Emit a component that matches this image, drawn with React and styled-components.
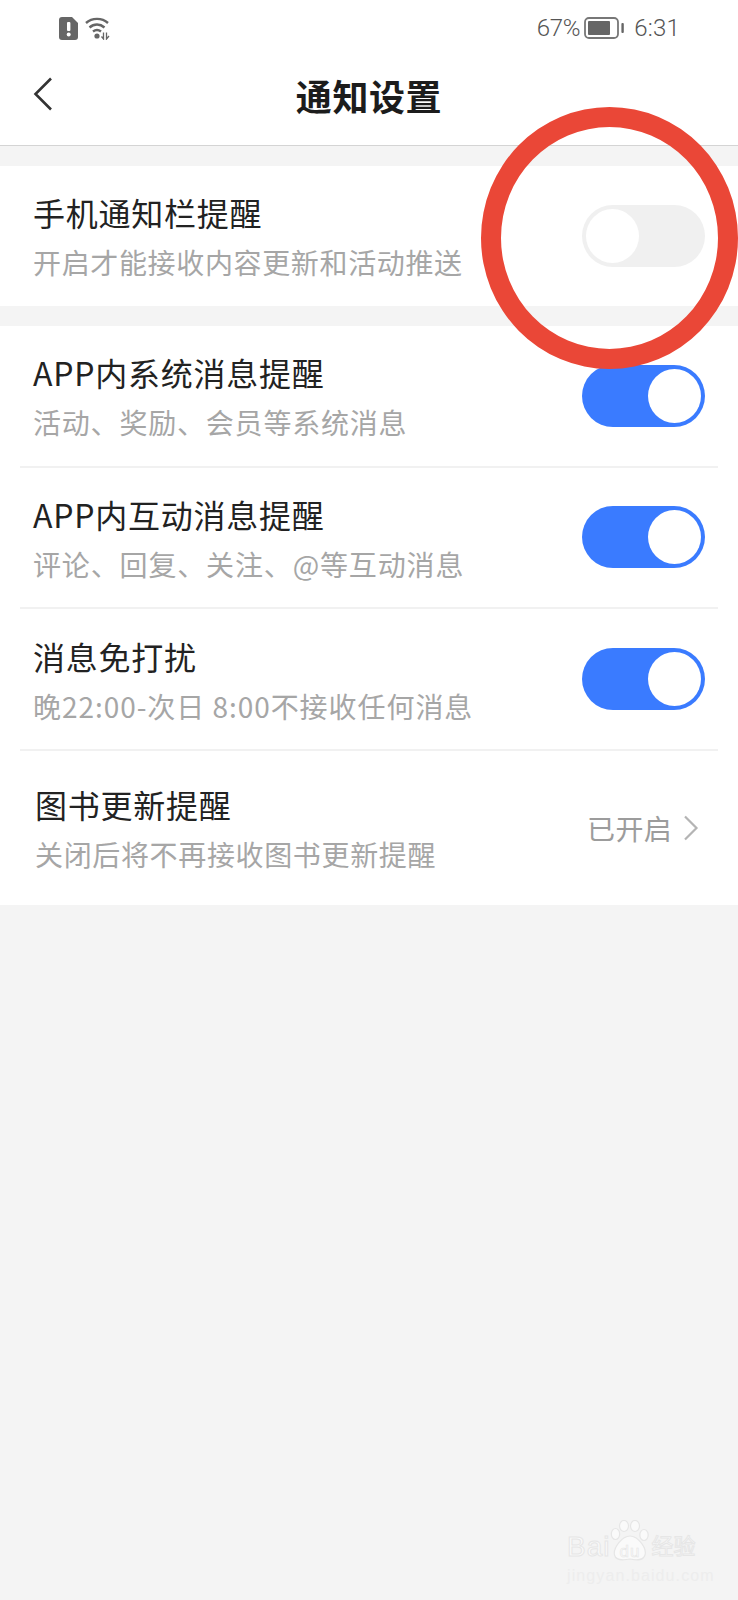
import React from "react";
import styled, { createGlobalStyle } from "styled-components";

const GlobalStyle = createGlobalStyle`
    html, body {
        margin: 0;
        padding: 0;
        background: #f4f4f4;
    }

    body {
        font-family: "Noto Sans CJK SC", "Noto Sans", sans-serif;
    }
`;

const rows = [
    { title: "APP内系统消息提醒", desc: "活动、奖励、会员等系统消息", spacing: 0.8 },
    { title: "APP内互动消息提醒", desc: "评论、回复、关注、@等互动消息", spacing: 0.85 },
    { title: "消息免打扰", desc: "晚22:00-次日 8:00不接收任何消息", spacing: 0.95 },
];

export default function App() {
    return (
        <Page>
            <GlobalStyle />
            <StatusBar>
                <StatusLeft>
                    <AlertIcon />
                    <WifiIcon />
                </StatusLeft>
                <StatusRight>
                    <span>67%</span>
                    <BatteryIcon />
                    <Clock>6:31</Clock>
                </StatusRight>
            </StatusBar>
            <Header>
                <BackButton>
                    <svg width="20" height="34" viewBox="0 0 20 34" fill="none">
                        <path d="M18 1.5 L2.5 17 L18 32.5" stroke="#333" strokeWidth="2.6" />
                    </svg>
                </BackButton>
                <PageTitle>通知设置</PageTitle>
            </Header>

            <Card>
                <Row>
                    <RowText>
                        <RowTitle>手机通知栏提醒</RowTitle>
                        <RowDesc>开启才能接收内容更新和活动推送</RowDesc>
                    </RowText>
                    <Toggle />
                </Row>
            </Card>

            <Card>
                {rows.map((row) => (
                    <Row key={row.title} $divided>
                        <RowText>
                            <RowTitle>{row.title}</RowTitle>
                            <RowDesc $spacing={row.spacing}>{row.desc}</RowDesc>
                        </RowText>
                        <Toggle $on />
                    </Row>
                ))}
                <BookRow>
                    <RowText>
                        <RowTitle>图书更新提醒</RowTitle>
                        <RowDesc>关闭后将不再接收图书更新提醒</RowDesc>
                    </RowText>
                    <RowValue>
                        已开启
                        <svg width="16" height="26" viewBox="0 0 16 26" fill="none">
                            <path d="M2 1.5 L13.5 13 L2 24.5" stroke="#b4b4b4" strokeWidth="2.2" />
                        </svg>
                    </RowValue>
                </BookRow>
            </Card>

            <RedRing />
            <Watermark>
                <WatermarkLogo>
                    <span>Bai</span>
                    <PawIcon />
                    <WatermarkCn>经验</WatermarkCn>
                </WatermarkLogo>
                <WatermarkUrl>jingyan.baidu.com</WatermarkUrl>
            </Watermark>
        </Page>
    );
}

function AlertIcon() {
    return (
        <svg width="19" height="23" viewBox="0 0 19 23">
            <path
                d="M3 0 H13 L19 6 V20 a3 3 0 0 1 -3 3 H3 a3 3 0 0 1 -3 -3 V3 a3 3 0 0 1 3 -3 Z"
                fill="#666"
            />
            <rect x="8" y="5" width="3.4" height="9" rx="1" fill="#fff" />
            <circle cx="9.7" cy="17.5" r="2" fill="#fff" />
        </svg>
    );
}

function WifiIcon() {
    return (
        <svg width="26" height="23" viewBox="0 0 26 23" fill="none">
            <path d="M1 6 C7 0.5 17 0.5 23 6" stroke="#666" strokeWidth="2.4" />
            <path d="M4.5 10.5 C9 6.5 15 6.5 19.5 10.5" stroke="#666" strokeWidth="2.4" />
            <path d="M8 14.5 C10.5 12.5 13.5 12.5 16 14.5" stroke="#666" strokeWidth="2.4" />
            <circle cx="12" cy="19" r="2.6" fill="#666" />
            <path d="M18.5 15.5 V22 L16.5 19.5 M21.5 15.5 V22 L24 19" stroke="#666" strokeWidth="1.3" />
        </svg>
    );
}

function BatteryIcon() {
    return (
        <svg width="40" height="22" viewBox="0 0 40 22" fill="none">
            <rect x="1" y="1" width="33" height="20" rx="4" stroke="#777" strokeWidth="1.8" />
            <rect x="4" y="4" width="22" height="14" rx="1" fill="#666" />
            <rect x="37.4" y="6" width="2.4" height="10" rx="1" fill="#666" />
        </svg>
    );
}

function PawIcon() {
    return (
        <svg width="40" height="42" viewBox="0 0 40 42" fill="#fafafa" stroke="#e6e6e6" strokeWidth="1.2">
            <ellipse cx="5.5" cy="14" rx="4.2" ry="5.5" />
            <ellipse cx="14" cy="6" rx="4.5" ry="5.5" />
            <ellipse cx="25" cy="6" rx="4.5" ry="5.5" />
            <ellipse cx="34" cy="15" rx="4.2" ry="5.5" />
            <path d="M20 16 C28 16 37 28 35 35 C33 41.5 25 40 20 39 C15 40 6 41.5 4.5 35 C3 28 12 16 20 16 Z" />
            <text x="20" y="37" textAnchor="middle" fontSize="17" strokeWidth="0.6" fontFamily="Liberation Sans, sans-serif">
                du
            </text>
        </svg>
    );
}

const Page = styled.div`
    position: relative;
    width: 738px;
    height: 1600px;
    overflow: hidden;
    background: #f4f4f4;
`;

const StatusBar = styled.div`
    height: 56px;
    padding: 0 58px 0 59px;
    box-sizing: border-box;
    display: flex;
    align-items: center;
    justify-content: space-between;
    background: #fff;
`;

const StatusLeft = styled.div`
    display: flex;
    align-items: center;
    gap: 7px;
`;

const StatusRight = styled.div`
    display: flex;
    align-items: center;
    gap: 4px;
    font-family: "Roboto", sans-serif;
    font-weight: 300;
    font-size: 24px;
    letter-spacing: -0.3px;
    color: #555;
`;

const Clock = styled.span`
    margin-left: 6px;
    letter-spacing: 0.2px;
`;

const Header = styled.div`
    position: relative;
    height: 90px;
    box-sizing: border-box;
    display: flex;
    align-items: center;
    justify-content: center;
    background: #fff;
    border-bottom: 1px solid #d4d4d4;
`;

const BackButton = styled.div`
    position: absolute;
    left: 33px;
    top: 21px;
    line-height: 0;
`;

const PageTitle = styled.div`
    margin-top: -12px;
    font-size: 36px;
    line-height: 44px;
    font-weight: 700;
    letter-spacing: 0.6px;
    color: #1c1c1c;
`;

const Card = styled.div`
    margin-top: 20px;
    padding: 0 20px;
    background: #fff;
`;

const Row = styled.div`
    height: ${(p) => (p.$divided ? "141.67px" : "140px")};
    box-sizing: border-box;
    padding: ${(p) => (p.$divided ? "2px 13px 0 13px" : "0 13px 0 13px")};
    display: flex;
    align-items: center;
    justify-content: space-between;
    border-bottom: ${(p) => (p.$divided ? "2px solid #f1f1f1" : "none")};
`;

const BookRow = styled(Row)`
    height: 154px;
    padding: 2px 19px 0 15px;
`;

const RowText = styled.div`
    display: flex;
    flex-direction: column;
    gap: 9px;
`;

const RowTitle = styled.div`
    font-size: 32px;
    line-height: 42px;
    letter-spacing: 0.75px;
    color: #222;
`;

const RowDesc = styled.div`
    font-size: 28px;
    line-height: 40px;
    letter-spacing: ${(p) => p.$spacing ?? 0.65}px;
    color: #a6a6a6;
`;

const RowValue = styled.div`
    display: flex;
    align-items: center;
    gap: 11px;
    margin-top: -2px;
    font-size: 28px;
    letter-spacing: 0.3px;
    color: #9c9c9c;
`;

const Toggle = styled.div`
    position: relative;
    flex: none;
    width: 123px;
    height: 62px;
    margin-top: ${(p) => (p.$on ? "-2px" : "0")};
    border-radius: 31px;
    background: ${(p) => (p.$on ? "#3a7bff" : "#f0f0f0")};

    &::after {
        content: "";
        position: absolute;
        top: 4px;
        left: ${(p) => (p.$on ? "66px" : "4px")};
        width: 53px;
        height: 54px;
        border-radius: 50%;
        background: #fff;
    }
`;

const RedRing = styled.div`
    position: absolute;
    left: 481px;
    top: 107px;
    width: 257px;
    height: 262px;
    box-sizing: border-box;
    border: 20px solid #ea4737;
    border-radius: 50%;
`;

const Watermark = styled.div`
    position: absolute;
    left: 567px;
    top: 1520px;
    width: 140px;
`;

const WatermarkLogo = styled.div`
    display: flex;
    align-items: flex-end;
    font-family: "Liberation Sans", "Noto Sans CJK SC", sans-serif;
    font-weight: 400;
    font-size: 28px;
    line-height: 30px;
    letter-spacing: 1px;
    color: #fafafa;
    -webkit-text-stroke: 1px #e6e6e6;
`;

const WatermarkCn = styled.span`
    font-size: 22px;
    letter-spacing: 0;
    margin-left: 1px;
`;

const WatermarkUrl = styled.div`
    font-family: "Liberation Sans", sans-serif;
    font-size: 16px;
    line-height: 18px;
    letter-spacing: 1.1px;
    color: #ededed;
    margin-top: 5px;
`;
